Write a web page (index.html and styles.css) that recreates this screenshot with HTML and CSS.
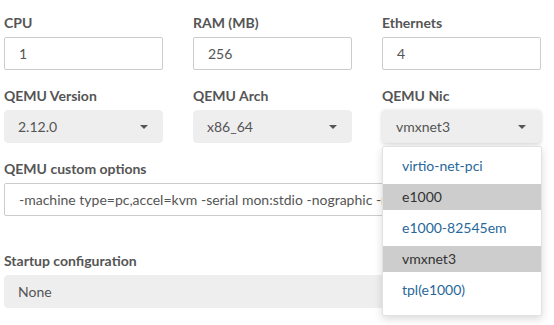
FILE: index.html
```html
<!DOCTYPE html>
<html>
<head>
    <title>QEMU Node Settings</title>
    <link rel="stylesheet" href="styles.css">
</head>
<body>

<div class="container">
    <div class="row">
        <div class="field">
            <label>CPU</label>
            <div class="input">1</div>
        </div>
        <div class="field">
            <label>RAM (MB)</label>
            <div class="input">256</div>
        </div>
        <div class="field">
            <label>Ethernets</label>
            <div class="input">4</div>
        </div>
    </div>

    <div class="row">
        <div class="field">
            <label>QEMU Version</label>
            <div class="select">2.12.0<span class="caret"></span></div>
        </div>
        <div class="field">
            <label>QEMU Arch</label>
            <div class="select">x86_64<span class="caret"></span></div>
        </div>
        <div class="field nic">
            <label>QEMU Nic</label>
            <div class="select open">vmxnet3<span class="caret"></span></div>
            <ul class="dropdown">
                <li>virtio-net-pci</li>
                <li class="active">e1000</li>
                <li>e1000-82545em</li>
                <li class="active">vmxnet3</li>
                <li>tpl(e1000)</li>
            </ul>
        </div>
    </div>

    <div class="field wide options">
        <label>QEMU custom options</label>
        <div class="input">-machine type=pc,accel=kvm -serial mon:stdio -nographic -no-user-config -nodefaults -display none -vga std -rtc base=utc</div>
    </div>

    <div class="field wide">
        <label>Startup configuration</label>
        <div class="select">None</div>
    </div>
</div>

</body>
</html>
```

FILE: styles.css
```css
body {
    margin: 0;
    padding: 0;
    background: #fff;
    font-family: 'Lato', sans-serif;
    font-size: 14px;
    color: #555;
}
.container {
    width: 538px;
    padding: 14px 0 0 4px;
}
.row {
    display: grid;
    grid-template-columns: 159px 159px 159px;
    column-gap: 30px;
}
.field {
    margin-bottom: 17px;
}
.field.options {
    margin-bottom: 36px;
}
.nic {
    position: relative;
}
label {
    display: block;
    font-weight: bold;
    line-height: 18px;
    margin-bottom: 5px;
    color: #555;
}
.input, .select {
    box-sizing: border-box;
    height: 33px;
    line-height: 31px;
    padding: 0 14px;
    white-space: nowrap;
    overflow: hidden;
}
.input {
    border: 1px solid #ccc;
    border-radius: 2px;
}
.select {
    position: relative;
    background: #eee;
    border: 1px solid #eee;
    border-radius: 4px;
    padding-left: 13px;
}
.select.open {
    box-shadow: 0 1px 4px rgba(0, 0, 0, 0.18);
}
.caret {
    position: absolute;
    right: 14px;
    top: 14px;
    width: 0;
    height: 0;
    border-left: 4px solid transparent;
    border-right: 4px solid transparent;
    border-top: 4px solid #555;
}
.dropdown {
    position: absolute;
    left: 0;
    top: 100%;
    width: 158px;
    margin: 3px 0 0;
    padding: 6px 0 12px;
    list-style: none;
    background: #fff;
    border: 1px solid #e2e2e2;
    border-radius: 2px;
    box-shadow: 0 3px 8px rgba(0, 0, 0, 0.15);
    z-index: 10;
}
.dropdown li {
    height: 26px;
    line-height: 26px;
    padding-left: 19px;
    margin-bottom: 5px;
    color: #28679a;
}
.dropdown li:last-child {
    margin-bottom: 0;
}
.dropdown li.active {
    background: #cdcdcd;
    color: #333;
}
```
